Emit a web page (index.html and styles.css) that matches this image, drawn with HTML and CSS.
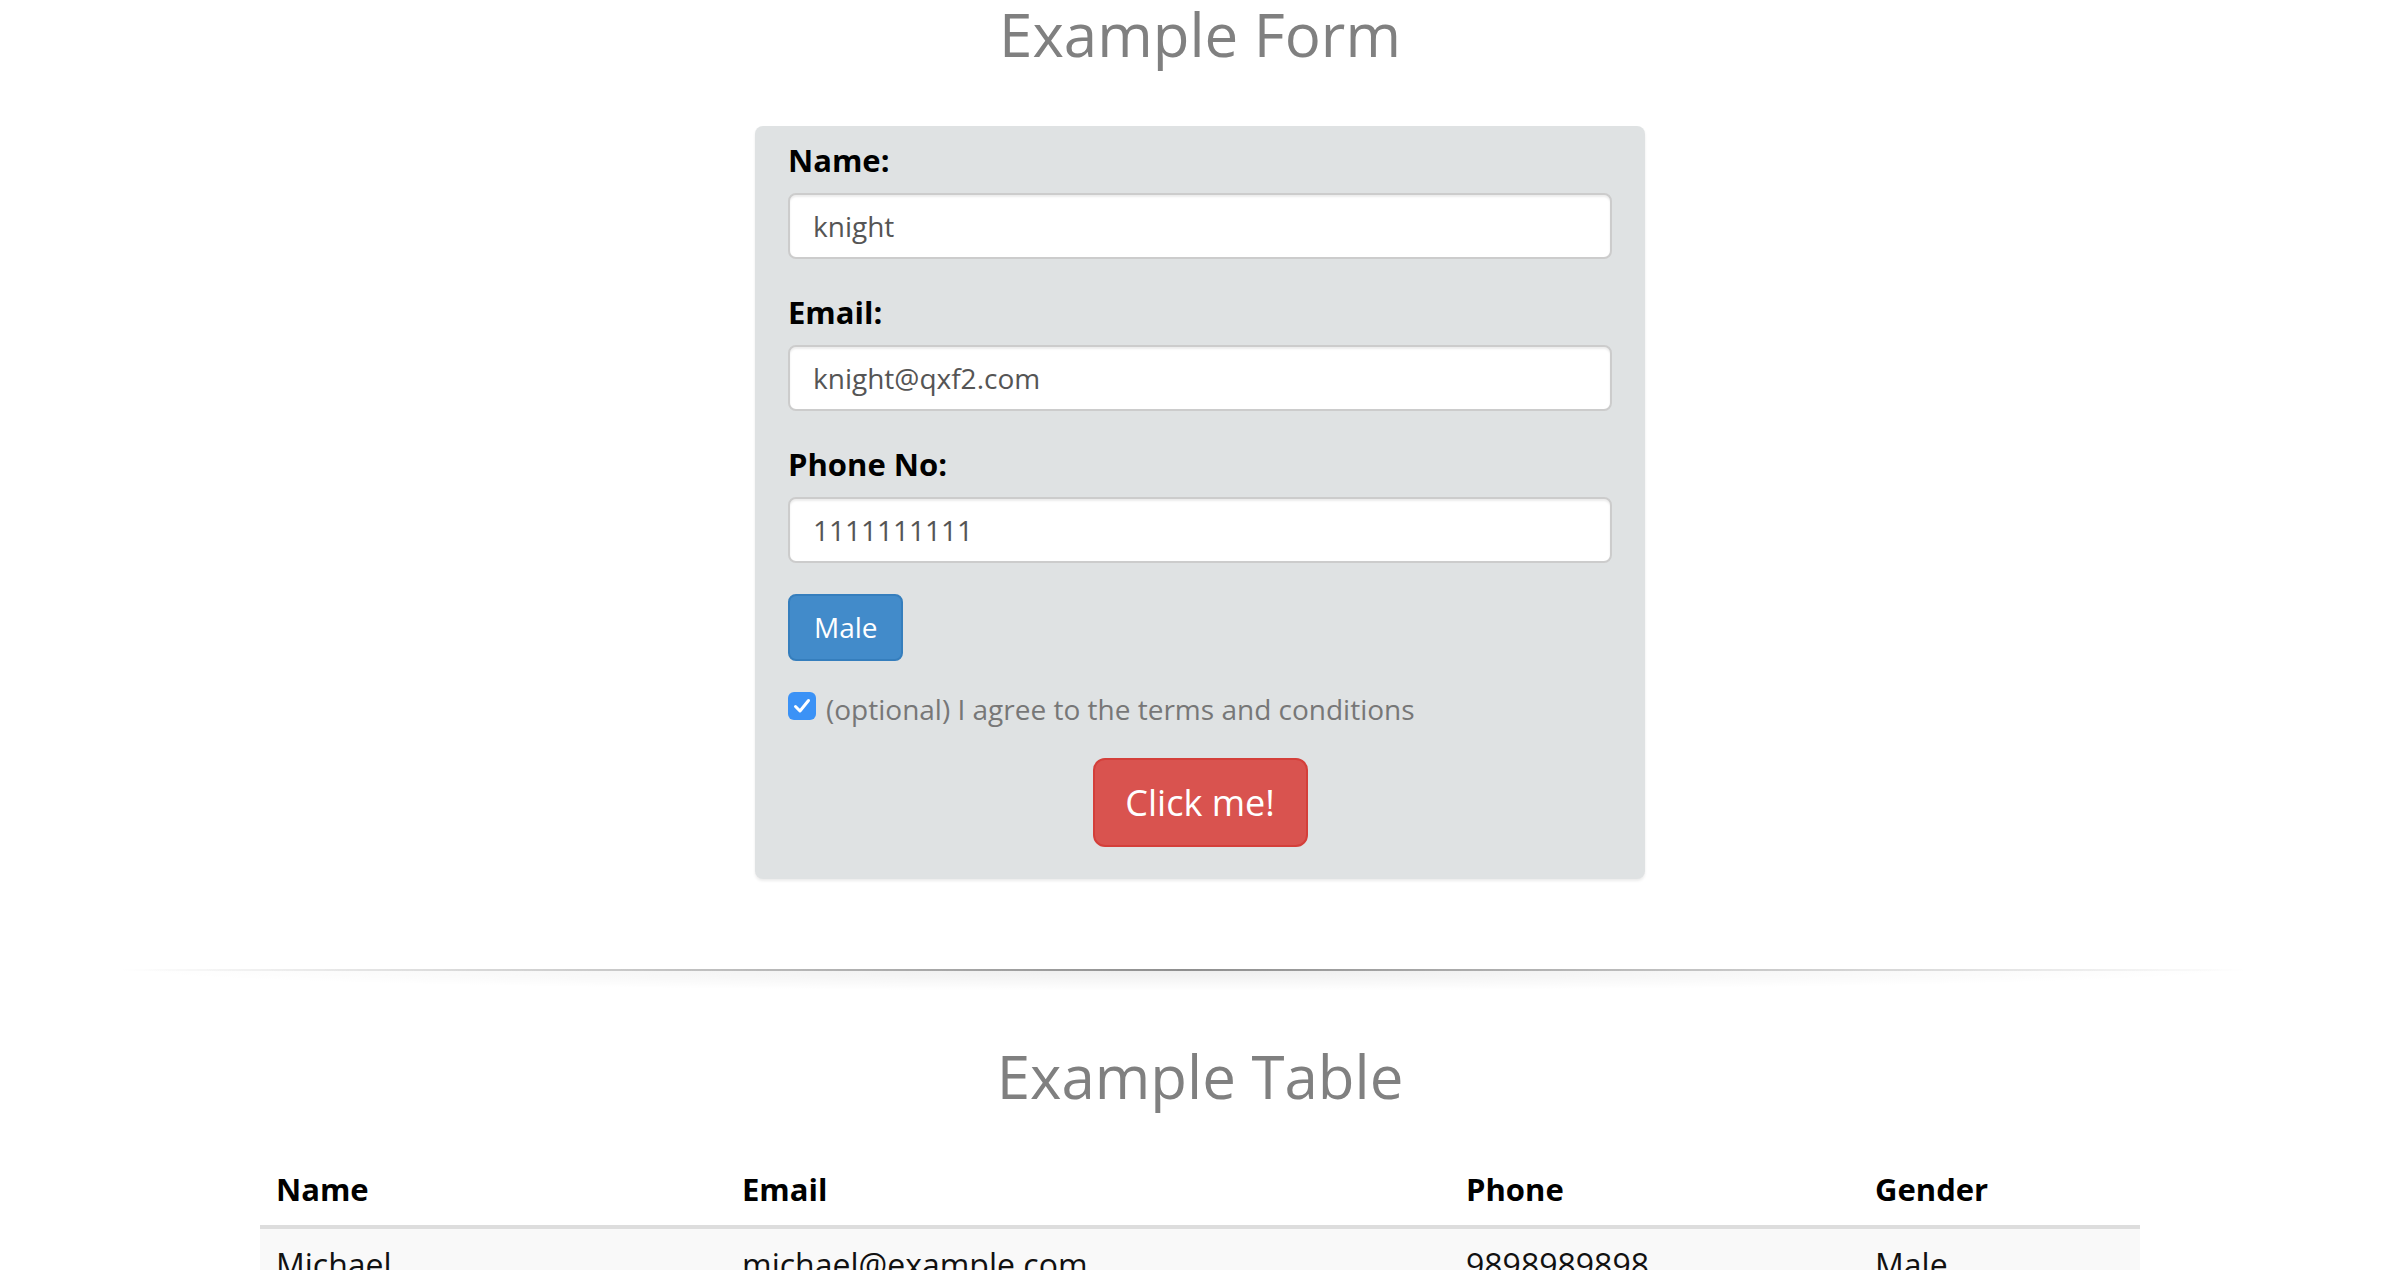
FILE: index.html
```html
<!DOCTYPE html>
<html lang="en">
<head>
<meta charset="utf-8">
<title>Example Form</title>
<link rel="stylesheet" href="styles.css">
</head>
<body>
  <h1 class="page-title">Example Form</h1>

  <form class="form-card">
    <div class="form-group">
      <label class="field-label" for="name">Name:</label>
      <input class="field-input" id="name" type="text" value="knight">
    </div>
    <div class="form-group">
      <label class="field-label" for="email">Email:</label>
      <input class="field-input" id="email" type="text" value="knight@qxf2.com">
    </div>
    <div class="form-group">
      <label class="field-label" for="phone">Phone No:</label>
      <input class="field-input" id="phone" type="text" value="1111111111">
    </div>

    <button type="button" class="btn-gender">Male</button>

    <label class="check-row">
      <span class="check-box">
        <svg viewBox="0 0 28 28" width="28" height="28" aria-hidden="true">
          <path d="M7.5 14.5 L12 19 L20.5 8.5" fill="none" stroke="#fff" stroke-width="3" stroke-linecap="round" stroke-linejoin="round"/>
        </svg>
      </span>
      <span class="check-text">(optional) I agree to the terms and conditions</span>
    </label>

    <button type="button" class="btn-submit">Click me!</button>
  </form>

  <div class="divider"></div>

  <h2 class="page-title table-title">Example Table</h2>

  <table class="data-table">
    <colgroup>
      <col class="col-name">
      <col class="col-email">
      <col class="col-phone">
      <col class="col-gender">
    </colgroup>
    <thead>
      <tr><th>Name</th><th>Email</th><th>Phone</th><th>Gender</th></tr>
    </thead>
    <tbody>
      <tr><td>Michael</td><td>michael@example.com</td><td>9898989898</td><td>Male</td></tr>
      <tr><td>Archana</td><td>archana@example.com</td><td>7887878787</td><td>Female</td></tr>
      <tr><td>Rohan</td><td>rohan@example.com</td><td>6767676767</td><td>Male</td></tr>
    </tbody>
  </table>
</body>
</html>
```

FILE: styles.css
```css
html, body {
  margin: 0;
  padding: 0;
  background: #ffffff;
}

body {
  font-family: "Open Sans", "Noto Sans", "Liberation Sans", sans-serif;
  color: #333333;
}

.page-title {
  margin: 4px 0 0;
  font-size: 60px;
  line-height: 60px;
  font-weight: 400;
  color: #808080;
  text-align: center;
}

.form-card {
  box-sizing: border-box;
  width: 890px;
  margin: 62px auto 0;
  padding: 12px 33px 32px;
  background: #dfe2e3;
  border-radius: 8px;
  box-shadow: 0 2px 3px rgba(0, 0, 0, 0.08);
}

.form-group {
  margin-bottom: 31px;
}

.field-label {
  display: block;
  font-size: 31px;
  line-height: 44px;
  font-weight: 700;
  color: #000000;
  margin-bottom: 11px;
}

.field-input {
  box-sizing: border-box;
  display: block;
  width: 100%;
  height: 66px;
  margin: 0;
  padding: 0 23px;
  border: 2px solid #cccccc;
  border-radius: 8px;
  background: #ffffff;
  box-shadow: inset 0 2px 2px rgba(0, 0, 0, 0.075);
  font-family: inherit;
  font-size: 28px;
  color: #555555;
  outline: none;
}

.btn-gender {
  box-sizing: border-box;
  display: block;
  height: 67px;
  margin: 0;
  padding: 0 23px 0 24px;
  border: 2px solid #357ebd;
  border-radius: 8px;
  background: #428bca;
  color: #ffffff;
  font-family: inherit;
  font-size: 28px;
  line-height: 63px;
}

.check-row {
  display: flex;
  align-items: flex-start;
  gap: 10px;
  height: 28px;
  margin-top: 31px;
}

.check-box {
  display: block;
  width: 28px;
  height: 28px;
  border-radius: 6px;
  background: #3b92f6;
  flex: none;
}

.check-box svg {
  display: block;
}

.check-text {
  font-size: 28px;
  line-height: 28px;
  padding-top: 3px;
  color: #777777;
}

.btn-submit {
  box-sizing: border-box;
  display: block;
  width: 215px;
  height: 89px;
  margin: 38px auto 0;
  padding: 0;
  border: 2px solid #d43f3a;
  border-radius: 12px;
  background: #d9534f;
  color: #ffffff;
  font-family: inherit;
  font-size: 36px;
  line-height: 85px;
}

.divider {
  width: 2130px;
  height: 22px;
  margin: 90px 0 0 118px;
  background:
    linear-gradient(to right, rgba(0, 0, 0, 0), rgba(0, 0, 0, 0.4) 50%, rgba(0, 0, 0, 0)) top / 100% 2px no-repeat,
    radial-gradient(ellipse 50% 100% at 50% 0, rgba(0, 0, 0, 0.07), rgba(0, 0, 0, 0)) top / 100% 100% no-repeat;
}

.table-title {
  margin-top: 55px;
}

.data-table {
  width: 1880px;
  margin: 47px auto 0;
  border-collapse: collapse;
  table-layout: fixed;
}

.col-name { width: 466px; }
.col-email { width: 724px; }
.col-phone { width: 409px; }
.col-gender { width: 281px; }

.data-table th,
.data-table td {
  padding: 16px 16px;
  text-align: left;
  vertical-align: top;
}

.data-table th {
  font-size: 31px;
  line-height: 40px;
  font-weight: 700;
  color: #000000;
  border-bottom: 4px solid #dddddd;
}

.data-table td {
  font-size: 32px;
  line-height: 40px;
  color: #111111;
  border-top: 2px solid #dddddd;
}

.data-table tbody tr:first-child td {
  border-top: 0;
}

.data-table tbody tr:nth-child(odd) {
  background: #f9f9f9;
}
```
